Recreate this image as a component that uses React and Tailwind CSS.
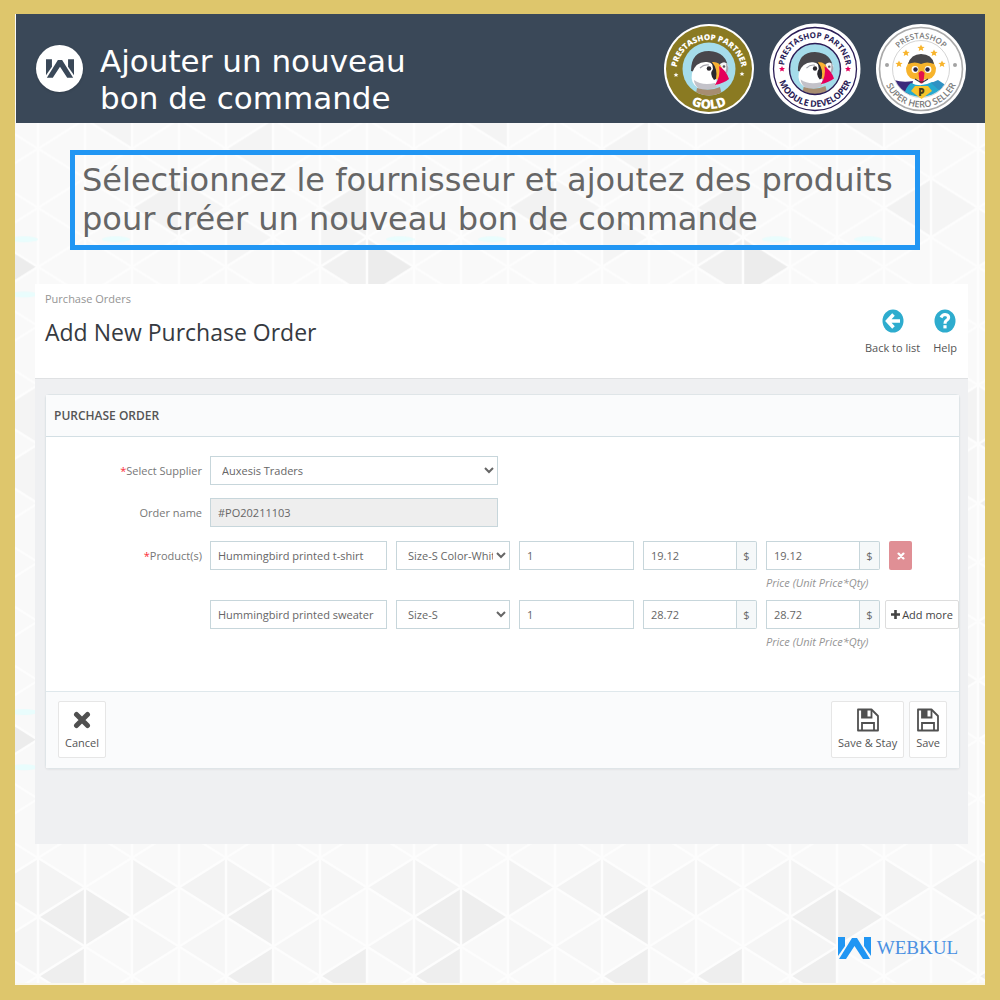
import React from 'react';

// Background cells that are darker than the rest: [column, half row, direction, fill]
const CELLS = [
    [0, 0, 'left', '#eeeeee'],
    [1, 0, 'right', '#eeeeee'],
    [4, 0, 'left', '#eeeeee'],
    [0, 2, 'left', '#eeeeee'],
    [4, 2, 'left', '#eeeeee'],
    [6, 2, 'left', '#eeeeee'],
    [0, 15, 'right', '#f4f4f4'],
    [2, 15, 'right', '#f3f3f3'],
    [3, 15, 'left', '#f3f3f3'],
    [4, 15, 'right', '#f4f4f4'],
    [5, 15, 'left', '#f5f5f5'],
    [6, 15, 'right', '#f6f6f6'],
    [7, 15, 'left', '#f4f4f4'],
    [0, 1, 'right', '#f5f5f5'],
    [2, 1, 'right', '#f6f6f6'],
    [3, 1, 'left', '#f6f6f6'],
    [5, 1, 'left', '#f6f6f6'],
    [7, 1, 'left', '#f5f5f5'],
    [2, 8, 'left', '#f2f2f2'],
    [3, 8, 'right', '#f5f5f5'],
    [6, 8, 'left', '#f0f0f0'],
    [7, 10, 'right', '#ececec'],
    [6, 10, 'left', '#f1f1f1'],
    [6, 9, 'right', '#f4f4f4'],
    [4, 9, 'right', '#f5f5f5'],
    [1, 5, 'left', '#f4f4f4'],
    [4, 6, 'left', '#f4f4f4'],
];

const COL = 47;
const HALF = 30;

const cellPoints = (col, row, direction) => {
    const x = col * COL;
    const y = row * HALF;
    return direction === 'left'
        ? `${x},${y} ${x + COL},${y - HALF} ${x + COL},${y + HALF}`
        : `${x + COL},${y} ${x},${y - HALF} ${x},${y + HALF}`;
};

const TriangleBackground = () => {
    const cols = [0, 1, 2, 3, 4, 5, 6, 7, 8];
    const rows = [-8, -6, -4, -2, 0, 2, 4, 6, 8, 10, 12, 14, 16, 18, 20, 22];
    return (
        <svg className="absolute inset-0 w-full h-full" aria-hidden="true">
            <defs>
                <pattern
                    id="triangles"
                    width="376"
                    height="480"
                    patternUnits="userSpaceOnUse"
                    patternTransform="translate(23 903) scale(1 .985)"
                >
                    <rect width="376" height="480" fill="#f9f9f9" />
                    {CELLS.map(([col, row, direction, fill]) => (
                        <polygon key={`${col}-${row}-${direction}`} points={cellPoints(col, row, direction)} fill={fill} />
                    ))}
                    <polygon points={cellPoints(0, 16, 'left')} fill="#eeeeee" />
                    <polygon points={cellPoints(1, 16, 'right')} fill="#eeeeee" />
                    <polygon points={cellPoints(4, 16, 'left')} fill="#eeeeee" />
                    <g stroke="#fdfdfd" strokeWidth="2.5">
                        {cols.map((c) => (
                            <line key={c} x1={c * COL} y1="0" x2={c * COL} y2="480" />
                        ))}
                        {rows.map((r) => (
                            <g key={r}>
                                <line x1="0" y1={r * HALF} x2="376" y2={(r + 8) * HALF} />
                                <line x1="0" y1={r * HALF} x2="376" y2={(r - 8) * HALF} />
                            </g>
                        ))}
                    </g>
                    <g fill="#e9fdfd">
                        <ellipse cx="78" cy="272" rx="14" ry="3" />
                        <ellipse cx="362" cy="272" rx="14" ry="3" />
                        <ellipse cx="362" cy="328" rx="14" ry="3" />
                    </g>
                </pattern>
            </defs>
            <rect width="100%" height="100%" fill="url(#triangles)" />
        </svg>
    );
};

const WebkulMark = ({ className }) => (
    <svg viewBox="0 0 33 22" className={className} fill="currentColor" aria-hidden="true">
        <polygon points="0,0 7,0 7,9 0,19" />
        <polygon points="1,22 14,1 19,1 32,22 25,22 16.5,9 8,22" />
        <polygon points="26,0 33,0 33,19 26,9" />
    </svg>
);

const STAR = '0,-3 .9,-1 3,-.9 1.4,.5 1.9,2.6 0,1.4 -1.9,2.6 -1.4,.5 -3,-.9 -.9,-1';

/**
 * Puffin - mascot portrait inside the partner badges
 */
const Puffin = ({ id }) => (
    <g>
        <clipPath id={id}>
            <circle cx="46" cy="46" r="26.5" />
        </clipPath>
        <g clipPath={`url(#${id})`}>
            <rect x="18" y="18" width="56" height="56" fill="#a5dcea" />
            <path d="M28 48 Q28 28 46 28 Q64 29 65 46 Q64 51 60 51 L46 52Z" fill="#48474c" />
            <path d="M29 50 Q33 38 44 39 Q51 40 52 46 L54 62 Q44 68 35 65 Q27 60 29 50Z" fill="#fff" />
            <path d="M31 57 Q39 63 52 60 L54 64 Q42 69 35 65 Q31 61 31 57Z" fill="#c3c2c9" />
            <path d="M57 41 Q62 37 65 42 Q66 47 63 50 L58 46Z" fill="#f4f4f6" />
            <path d="M63 40 Q67 44 64 50 L62 51 Q64 45 63 40Z" fill="#a9a9b1" />
            <path d="M48 39 Q54 43 55 55 L51 57 Q46 51 50 46 Q50 42 48 39Z" fill="#2a282e" />
            <path d="M49 39 Q56 38 59 45 L56 57 L53 56 Q55 46 49 39Z" fill="#f9b233" />
            <path d="M56 43 Q63 47 66 56 Q61 60 52 62 Q58 53 56 43Z" fill="#e5005b" />
            <path d="M37 45 Q41 41 46 42" fill="none" stroke="#a4a4ac" strokeWidth="1.2" />
            <circle cx="46" cy="45.500" r="2.3" fill="#29272d" />
            <circle cx="61" cy="43.500" r="1.3" fill="#55555d" />
            <path d="M34 65 Q46 69 57 64 L60 76 H32Z" fill="#a78d71" />
        </g>
    </g>
);

const GoldBadge = () => (
    <svg viewBox="0 0 92 92" className="w-[92px] h-[92px]" role="img" aria-label="PrestaShop Partner Gold">
        <defs>
            <path id="gold-top" d="M 13 50 A 33 33 0 1 1 79 50" />
            <path id="gold-bottom" d="M 6 46 A 40 40 0 0 0 86 46" />
        </defs>
        <circle cx="46" cy="46" r="45" fill="#fff" />
        <circle cx="46" cy="46" r="43" fill="#8a7a22" />
        <Puffin id="puffin-gold" />
        <g fill="#fff" fontFamily="Open Sans, sans-serif" fontWeight="800" textAnchor="middle">
            <text fontSize="8">
                <textPath href="#gold-top" startOffset="50%">PRESTASHOP PARTNER</textPath>
            </text>
            <text fontSize="13">
                <textPath href="#gold-bottom" startOffset="50%">GOLD</textPath>
            </text>
        </g>
        <polygon points={STAR} fill="#fff" transform="translate(13 52) scale(.8)" />
        <polygon points={STAR} fill="#fff" transform="translate(79 51) scale(.8)" />
    </svg>
);

const DeveloperBadge = () => (
    <svg viewBox="0 0 92 92" className="w-[92px] h-[92px]" role="img" aria-label="PrestaShop Partner Module Developer">
        <defs>
            <path id="dev-top" d="M 15 46 A 31 31 0 0 1 77 46" />
            <path id="dev-bottom" d="M 8 46 A 38 38 0 0 0 84 46" />
        </defs>
        <circle cx="46" cy="46" r="45.5" fill="#fff" />
        <circle cx="46" cy="46" r="41.5" fill="none" stroke="#2a1c56" strokeWidth="1.3" />
        <g transform="translate(2.3 2.3) scale(.95)">
            <Puffin id="puffin-dev" />
        </g>
        <circle cx="46" cy="46" r="25.5" fill="none" stroke="#2a1c56" strokeWidth="1.4" />
        <g fill="#2a1c56" fontFamily="Open Sans, sans-serif" fontWeight="700" textAnchor="middle">
            <text fontSize="8">
                <textPath href="#dev-top" startOffset="50%">PRESTASHOP PARTNER</textPath>
            </text>
            <text fontSize="9">
                <textPath href="#dev-bottom" startOffset="50%">MODULE DEVELOPER</textPath>
            </text>
        </g>
        <polygon points={STAR} fill="#e5005b" transform="translate(13 46)" />
        <polygon points={STAR} fill="#e5005b" transform="translate(79 46)" />
    </svg>
);

const SellerBadge = () => (
    <svg viewBox="0 0 92 92" className="w-[92px] h-[92px]" role="img" aria-label="PrestaShop Super Hero Seller">
        <defs>
            <path id="hero-top" d="M 15.5 46 A 30.5 30.5 0 0 1 76.5 46" />
            <path id="hero-bottom" d="M 7.5 46 A 38.5 38.5 0 0 0 84.5 46" />
            <clipPath id="hero-clip">
                <circle cx="46" cy="46" r="28" />
            </clipPath>
        </defs>
        <circle cx="46" cy="46" r="45" fill="#fff" />
        <circle cx="46" cy="46" r="41.5" fill="none" stroke="#aaaaaa" strokeWidth="1.6" />
        <circle cx="46" cy="46" r="28.5" fill="none" stroke="#d4d4d4" strokeWidth="1" />
        <g clipPath="url(#hero-clip)">
            <path d="M19 57 Q28 60 38 58 L34 76 H24Z" fill="#3b2a7c" />
            <path d="M36 60 Q46 65 57 59 L66 61 L72 76 H28 Q30 64 36 60Z" fill="#27a9cf" />
            <path d="M56 60 L63 57 L72 63 L66 69Z" fill="#2f91c3" />
        </g>
        <path d="M40 63 H53 L57 68 L46.500 76 L36 68Z" fill="#f8c42c" />
        <path d="M31 45 Q34 34 46 33 Q58 34 61 45 Q61 54 54 56 L46 57 L38 56 Q31 54 31 45Z" fill="#f7b32b" />
        <path d="M33 41 Q36 31 46 31 Q57 31 59 41 Q52 38 46 41 Q40 38 33 41Z" fill="#49484a" />
        <circle cx="40" cy="46.500" r="3.4" fill="#fff" />
        <circle cx="53" cy="46.500" r="3.4" fill="#fff" />
        <circle cx="40.5" cy="46.500" r="2.2" fill="#2c2545" />
        <circle cx="52.5" cy="46.500" r="2.2" fill="#2c2545" />
        <path d="M43.500 50 Q46.500 46 49.500 50 L48.500 59 Q46.500 62 44.500 59Z" fill="#e3124b" />
        <path d="M40 56 L45 59 H48 L53 56" fill="none" stroke="#35343a" strokeWidth="1.2" />
        <text x="46.5" y="73" fontFamily="Open Sans, sans-serif" fontWeight="800" fontSize="10" textAnchor="middle" fill="#463a1c">
            P
        </text>
        <g fill="#f8b42c">
            <polygon points={STAR} transform="translate(24 41) scale(1.2)" />
            <polygon points={STAR} transform="translate(31 30) scale(1.2)" />
            <polygon points={STAR} transform="translate(46 25) scale(1.2)" />
            <polygon points={STAR} transform="translate(59 30) scale(1.2)" />
            <polygon points={STAR} transform="translate(67 41) scale(1.2)" />
        </g>
        <g fill="#7b7b7b" fontFamily="Open Sans, sans-serif" fontWeight="600" textAnchor="middle">
            <text fontSize="8">
                <textPath href="#hero-top" startOffset="50%">PRESTASHOP</textPath>
            </text>
            <text fontSize="9">
                <textPath href="#hero-bottom" startOffset="50%">SUPER HERO SELLER</textPath>
            </text>
        </g>
        <circle cx="12" cy="42" r="2" fill="#a3a3a3" />
        <circle cx="80" cy="42" r="2" fill="#a3a3a3" />
    </svg>
);

const BackIcon = () => (
    <svg viewBox="0 0 22 24" className="w-[22px] h-6" aria-hidden="true">
        <ellipse cx="11" cy="12" rx="10.500" ry="11.500" fill="#2eacce" />
        <path d="M11.500 5.500 L5.500 12 L11.500 18.500 M6.500 12 H18" fill="none" stroke="#fff" strokeWidth="3.5" />
    </svg>
);

const HelpIcon = () => (
    <svg viewBox="0 0 22 24" className="w-[22px] h-6" aria-hidden="true">
        <ellipse cx="11" cy="12" rx="10.500" ry="11.500" fill="#2eacce" />
        <path d="M7 8.500 Q8.500 5.500 11 5.500 Q14.800 5.800 14.600 8.800 Q14.300 10.600 12.300 11.600 Q11 12.300 11 14.800" fill="none" stroke="#fff" strokeWidth="3.2" />
        <rect x="9.400" y="16.200" width="3.200" height="3.200" fill="#fff" />
    </svg>
);

const CrossIcon = ({ className }) => (
    <svg viewBox="0 0 18 18" className={className} aria-hidden="true">
        <path d="M3.500 3.500 L14.500 14.500 M14.500 3.500 L3.500 14.500" stroke="currentColor" strokeWidth="5" strokeLinecap="round" />
    </svg>
);

const SaveIcon = () => (
    <svg viewBox="0 0 22 24" className="w-[22px] h-6" fill="none" stroke="#505050" strokeWidth="1.8" aria-hidden="true">
        <path d="M1 1.500 H14.500 L21 8 V22.500 H1Z" strokeLinejoin="round" />
        <path d="M5 22 V15 H17 V22 M5 2 V9.500 H14.500 V2" />
        <rect x="5" y="2" width="5.500" height="7" fill="#505050" stroke="none" />
    </svg>
);

const fieldClass = 'w-full min-w-0 h-[29px] pl-[7px] border border-[#c7d6db] bg-white text-[11px] text-[#666] focus:outline-none focus:border-[#25b9d7]';

const PriceInput = ({ label, value }) => (
    <div className="flex min-w-0">
        <input aria-label={label} className={fieldClass} defaultValue={value} />
        <span className="w-5 shrink-0 h-[29px] flex items-center justify-center rounded-r-xs border border-l-0 border-[#c7d6db] bg-[#f5f8f9] text-[11px] text-[#666]">
            $
        </span>
    </div>
);

const ProductRow = ({ id, name, options, qty, price, children }) => (
    <div className="flex gap-[5px]">
        <div className="grow grid grid-cols-[177fr_114fr_115fr_114fr_114fr] gap-x-[9px]">
            <input id={id} aria-label="Product" className={fieldClass} defaultValue={name} />
            <select aria-label="Combination" className={fieldClass}>
                {options.map((option) => (
                    <option key={option}>{option}</option>
                ))}
            </select>
            <input aria-label="Quantity" className={fieldClass} defaultValue={qty} />
            <PriceInput label="Unit price" value={price} />
            <div>
                <PriceInput label="Price" value={price} />
                <p className="h-[30px] pt-1 leading-[18px] whitespace-nowrap text-[11px] italic text-[#959595]">
                    Price (Unit Price*Qty)
                </p>
            </div>
        </div>
        <div className="w-[74px] shrink-0">{children}</div>
    </div>
);

const FooterButton = ({ icon, children }) => (
    <button type="button" className="h-[57px] px-[6px] flex flex-col items-center justify-center gap-[3px] rounded-xs border border-[#e6e6e6] bg-white text-[11px] leading-4 text-[#555]">
        {icon}
        {children}
    </button>
);

const App = () => {
    return (
        <div className="min-h-screen flex flex-col p-[15px] pt-[14px] bg-[#dec66c] font-['Open_Sans',sans-serif]">
            <div className="relative grow flex flex-col border-b-2 border-[#fbf8ec]">
                <TriangleBackground />

                <header className="relative ml-px h-[109px] pl-5 pr-[18px] flex items-center gap-[17px] bg-[#3a4858] text-white">
                    <div className="w-[47px] h-[47px] shrink-0 rounded-full bg-white flex items-center justify-center text-[#3a4858] shadow">
                        <WebkulMark className="w-7 h-[19px]" />
                    </div>
                    <h1 className="grow pt-[22px] font-['DejaVu_Sans',sans-serif] text-[31px] leading-[37px]">
                        Ajouter un nouveau
                        <br />
                        bon de commande
                    </h1>
                    <div className="flex shrink-0 gap-[14px]">
                        <GoldBadge />
                        <DeveloperBadge />
                        <SellerBadge />
                    </div>
                </header>

                <div className="relative ml-[55px] mt-[27px] mr-[65px] min-h-[100px] pl-[7px] pt-[6px] border-5 border-[#2196f3] font-['DejaVu_Sans',sans-serif] text-[32px] leading-[39px] text-[#666]">
                    Sélectionnez le fournisseur et ajoutez des produits
                    <br />
                    pour créer un nouveau bon de commande
                </div>

                <main className="relative ml-5 mr-[17px] mt-[34px] bg-[#eff0f2] pb-[75px]">
                    <div className="min-h-[95px] pl-[10px] pr-[11px] pt-[6px] flex justify-between border-b border-[#dfe1e3] bg-white">
                        <div>
                            <p className="text-[11px] leading-[18px] text-[#959595]">Purchase Orders</p>
                            <h2 className="mt-2 text-[23px] leading-8 text-[#363a41]">Add New Purchase Order</h2>
                        </div>
                        <nav className="flex gap-[13px] pt-[19px] text-[11px] leading-4 text-[#555]">
                            <a href="#list" className="flex flex-col items-center gap-[7px]">
                                <BackIcon />
                                Back to list
                            </a>
                            <a href="#help" className="flex flex-col items-center gap-[7px]">
                                <HelpIcon />
                                Help
                            </a>
                        </nav>
                    </div>

                    <form className="ml-[10px] mr-2 mt-[15px] rounded-sm border border-[#dfe5e8] bg-white shadow-xs">
                        <h3 className="h-[42px] pl-2 flex items-center border-b border-[#d3dfe4] bg-[#fafbfc] text-xs font-semibold text-[#555]">
                            PURCHASE ORDER
                        </h3>

                        <div className="grid grid-cols-[156px_1fr] gap-x-2 pt-[19px] pb-8 text-[11px] leading-[29px] text-[#777]">
                            <label htmlFor="supplier" className="text-right">
                                <span className="text-red-500">*</span>Select Supplier
                            </label>
                            <div className="h-[42px] flex">
                                <select id="supplier" className={`${fieldClass} max-w-72`}>
                                    <option>Auxesis Traders</option>
                                </select>
                            </div>

                            <label htmlFor="order-name" className="text-right">Order name</label>
                            <div className="h-[43px] flex">
                                <input
                                    id="order-name"
                                    readOnly
                                    defaultValue="#PO20211103"
                                    className="w-full max-w-72 h-[29px] px-[7px] border border-[#c7d6db] bg-[#eee] text-[11px] text-[#666]"
                                />
                            </div>

                            <label htmlFor="product-1" className="text-right">
                                <span className="text-red-500">*</span>Product(s)
                            </label>
                            <div>
                                <ProductRow
                                    id="product-1"
                                    name="Hummingbird printed t-shirt"
                                    options={['Size-S Color-White', 'Size-S Color-Black']}
                                    qty="1"
                                    price="19.12"
                                >
                                    <button type="button" aria-label="Remove" className="ml-1 w-[23px] h-[29px] flex items-center justify-center rounded-xs bg-[#e08f95] text-white">
                                        <CrossIcon className="w-2 h-2" />
                                    </button>
                                </ProductRow>
                                <ProductRow
                                    id="product-2"
                                    name="Hummingbird printed sweater"
                                    options={['Size-S', 'Size-M']}
                                    qty="1"
                                    price="28.72"
                                >
                                    <button type="button" className="w-full h-[29px] flex items-center justify-center gap-[2px] rounded-xs border border-[#dddddd] bg-white text-[11px] whitespace-nowrap text-[#444]">
                                        <svg viewBox="0 0 9 9" className="w-[9px] h-[9px]" aria-hidden="true">
                                            <path d="M4.500 0 V9 M0 4.500 H9" stroke="currentColor" strokeWidth="2.600" />
                                        </svg>
                                        Add more
                                    </button>
                                </ProductRow>
                            </div>
                        </div>

                        <div className="min-h-[77px] pl-3 pr-3 pt-[9px] flex items-start justify-between border-t border-[#dfe8ec] bg-[#fafbfc]">
                            <FooterButton icon={<CrossIcon className="w-[18px] h-6 text-[#505050]" />}>Cancel</FooterButton>
                            <div className="flex gap-[5px]">
                                <FooterButton icon={<SaveIcon />}>Save &amp; Stay</FooterButton>
                                <FooterButton icon={<SaveIcon />}>Save</FooterButton>
                            </div>
                        </div>
                    </form>
                </main>

                <footer className="relative grow flex items-end justify-end gap-[6px] pr-[27px] pb-[23px] text-[#2196f3]">
                    <WebkulMark className="w-[33px] h-[22px] mb-px" />
                    <span className="font-['Liberation_Serif',serif] text-[19px] leading-6 text-[#4a90e2]">WEBKUL</span>
                </footer>
            </div>
        </div>
    );
};

export default App;
